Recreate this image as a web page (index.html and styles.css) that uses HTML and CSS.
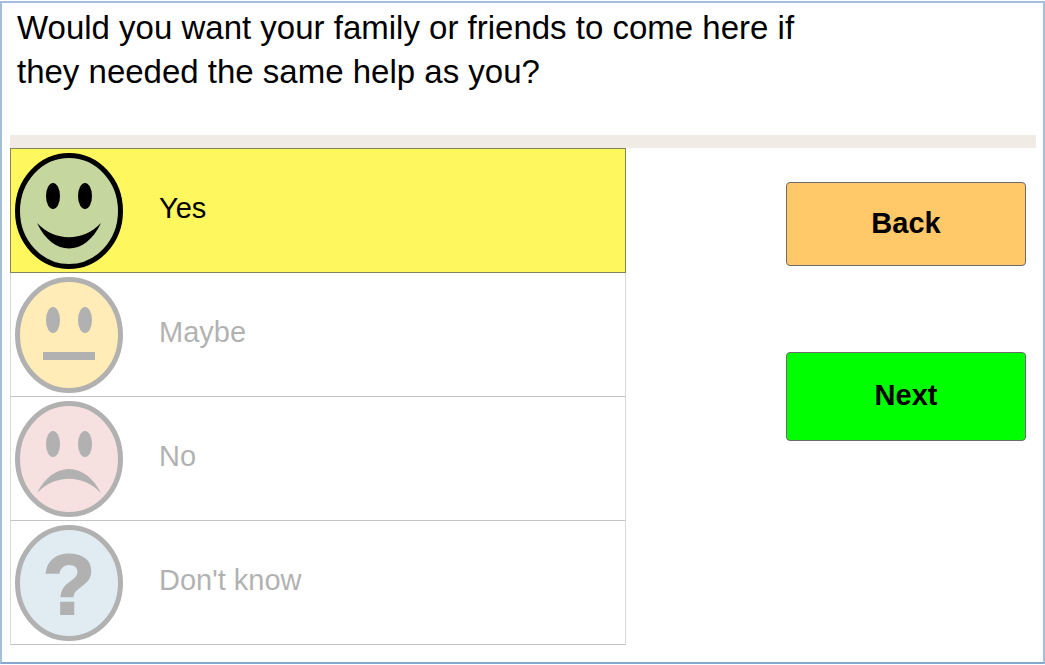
FILE: index.html
```html
<!DOCTYPE html>
<html lang="en">
<head>
  <meta charset="UTF-8" />
  <meta name="viewport" content="width=device-width, initial-scale=1.0"/>
  <title>Survey</title>
  <link rel="stylesheet" href="styles.css">
</head>
<body>

<form class="survey">
  <h1 class="question" id="question">Would you want your family or friends to come here if they needed the same help as you?</h1>

  <div class="content">
    <div class="options" role="radiogroup" aria-labelledby="question">

      <label class="option">
        <input type="radio" name="answer" value="yes" checked>
        <svg class="face" viewBox="0 0 108 116" aria-hidden="true">
          <ellipse class="head" cx="54" cy="58" rx="51.5" ry="55.5" fill="#c5d79f"/>
          <ellipse cx="38" cy="43" rx="7" ry="13"/>
          <ellipse cx="70" cy="43" rx="7" ry="13"/>
          <path d="M22 70C38 104 70 104 86 70C68 89 40 89 22 70Z"/>
        </svg>
        <span class="answer">Yes</span>
      </label>

      <label class="option">
        <input type="radio" name="answer" value="maybe">
        <svg class="face" viewBox="0 0 108 116" aria-hidden="true">
          <ellipse class="head" cx="54" cy="58" rx="51.5" ry="55.5" fill="#ffc312"/>
          <ellipse cx="38" cy="43" rx="7" ry="13"/>
          <ellipse cx="70" cy="43" rx="7" ry="13"/>
          <rect x="28" y="75" width="52" height="8"/>
        </svg>
        <span class="answer">Maybe</span>
      </label>

      <label class="option">
        <input type="radio" name="answer" value="no">
        <svg class="face" viewBox="0 0 108 116" aria-hidden="true">
          <ellipse class="head" cx="54" cy="58" rx="51.5" ry="55.5" fill="#e29c9c"/>
          <ellipse cx="38" cy="43" rx="7" ry="13"/>
          <ellipse cx="70" cy="43" rx="7" ry="13"/>
          <path d="M22 92C38 60 70 60 86 92C68 73 40 73 22 92Z"/>
        </svg>
        <span class="answer">No</span>
      </label>

      <label class="option">
        <input type="radio" name="answer" value="dont-know">
        <svg class="face" viewBox="0 0 108 116" aria-hidden="true">
          <ellipse class="head" cx="54" cy="58" rx="51.5" ry="55.5" fill="#9bc0d7"/>
          <text class="mark" x="54" y="89">?</text>
        </svg>
        <span class="answer">Don't know</span>
      </label>

    </div>

    <div class="actions">
      <button type="button" class="btn btn-back">Back</button>
      <button type="button" class="btn btn-next">Next</button>
    </div>
  </div>
</form>

</body>
</html>
```
FILE: styles.css
```css
* {
  margin: 0;
  padding: 0;
  box-sizing: border-box;
}

body {
  font-family: "Liberation Sans", Arial, sans-serif;
  background: #fff;
  color: #000;
  padding: 1px 0;
}

.survey {
  min-height: calc(100vh - 2px);
  padding: 0 7px 0 8px;
  border: 2px solid #a3bfdd;
  border-bottom-color: #86a8cf;
}

.question {
  max-width: 820px;
  min-height: 132px;
  padding: 3px 7px;
  font-size: 33px;
  line-height: 44px;
  font-weight: normal;
}

.content {
  display: flex;
  justify-content: space-between;
  align-items: flex-start;
  border-top: 13px solid #f0ebe4;
}

/* Options */
.options {
  flex: 0 0 60%;
  padding-top: 1px;
}

.option {
  display: flex;
  align-items: center;
  gap: 36px;
  height: 124px;
  padding-left: 4px;
  border: 1px solid #d9d9d9;
  border-top: none;
  border-bottom-color: #c4c4c4;
  cursor: pointer;
}

.option input {
  position: absolute;
  opacity: 0;
}

.option:has(input:checked) {
  background: #fff75e;
  border-color: #84845c;
  box-shadow: 0 -1px #84845c;
}

.face {
  width: 108px;
  height: 116px;
}

.head {
  stroke: #000;
  stroke-width: 5;
}

.mark {
  font-size: 86px;
  font-weight: bold;
  text-anchor: middle;
  stroke: #000;
  stroke-width: 2;
}

.answer {
  padding-bottom: 4px;
  font-size: 29px;
}

/* fade everything that isn't picked */
.option input:not(:checked) ~ * {
  opacity: 0.3;
}

/* Buttons */
.actions {
  display: flex;
  flex-direction: column;
  gap: 86px;
  width: 250px;
  padding: 34px 10px 0 0;
}

.btn {
  height: 84px;
  padding-bottom: 2px;
  border: 1px solid #6b6b6b;
  border-radius: 4px;
  font-family: inherit;
  font-size: 29px;
  font-weight: bold;
  color: #000;
  cursor: pointer;
}

.btn-back {
  background: #ffc869;
}

.btn-next {
  height: 89px;
  background: #00ff00;
}

@media (max-width: 700px) {
  .content { flex-direction: column; }
  .options { flex: none; width: 100%; }
  .actions { width: 100%; gap: 20px; }
}
```
